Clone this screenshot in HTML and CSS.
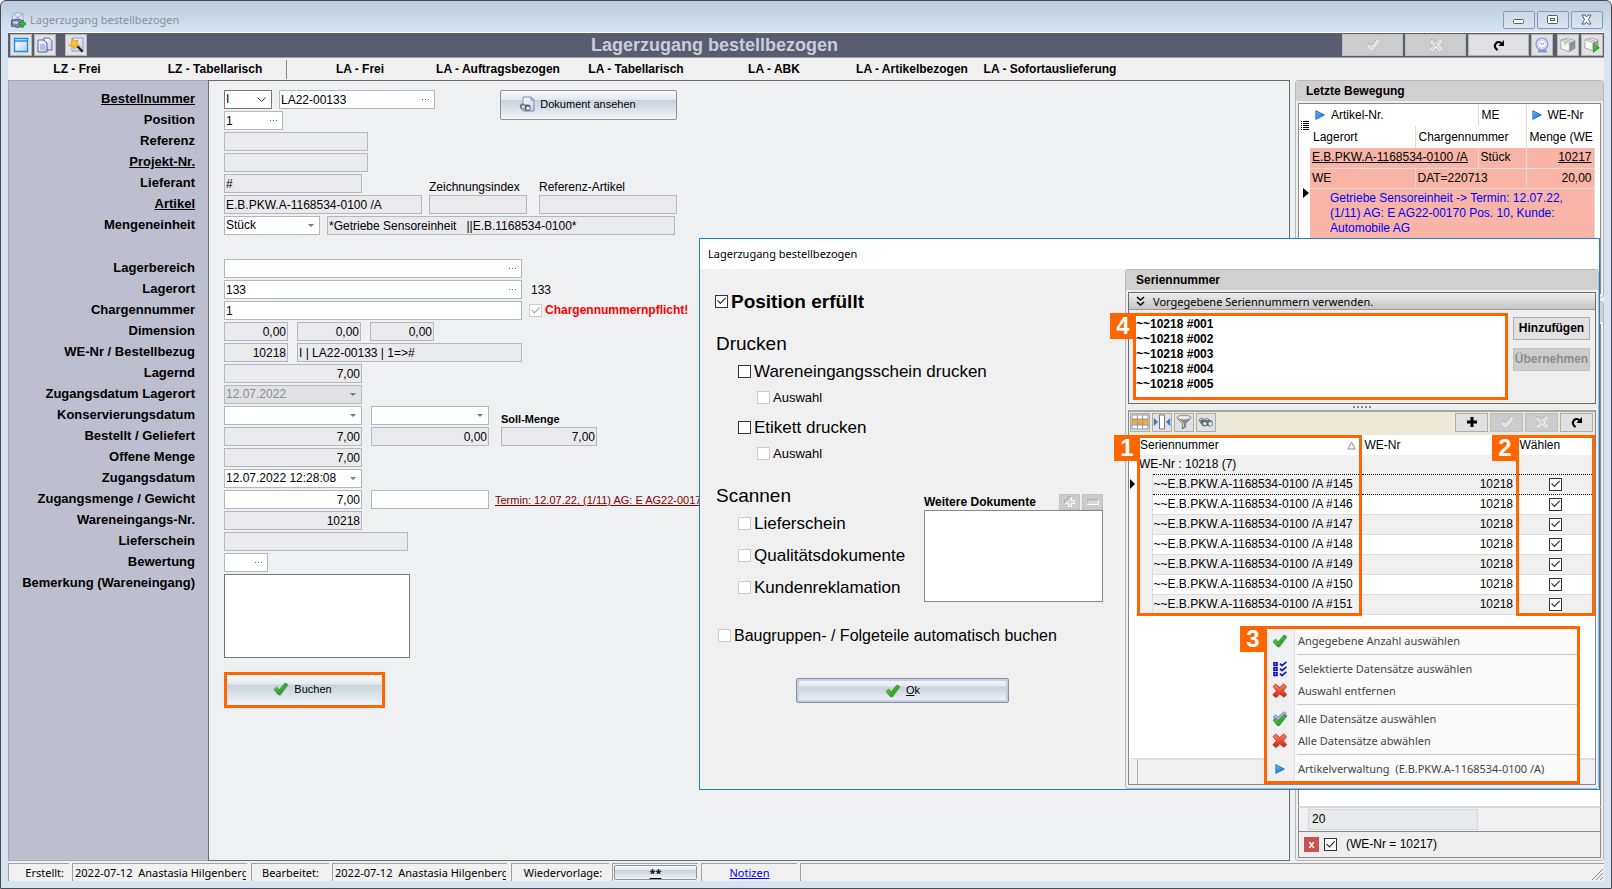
FILE: index.html
```html
<!DOCTYPE html>
<html lang="de">
<head>
<meta charset="utf-8">
<title>Lagerzugang bestellbezogen</title>
<link rel="stylesheet" href="styles.css">
</head>
<body>
<svg class="sprite" aria-hidden="true">
  <defs>
    <linearGradient id="gGreen" x1="0" y1="0" x2="1" y2="1"><stop offset="0" stop-color="#5fe04a"/><stop offset="1" stop-color="#0d8a12"/></linearGradient>
    <linearGradient id="gRed" x1="0" y1="0" x2="0" y2="1"><stop offset="0" stop-color="#ff8a5c"/><stop offset="1" stop-color="#d91e0c"/></linearGradient>
    <linearGradient id="gBlue" x1="0" y1="0" x2="1" y2="1"><stop offset="0" stop-color="#69c3ff"/><stop offset="1" stop-color="#0a5fd0"/></linearGradient>
    <linearGradient id="gPage" x1="0" y1="0" x2="1" y2="1"><stop offset="0" stop-color="#ffffff"/><stop offset="1" stop-color="#c3cdf0"/></linearGradient>
  </defs>
  <symbol id="i-check" viewBox="0 0 16 16"><path d="M2 9.5 4.2 7 7 9.6 12.6 2.8 15.4 4.6 8 14.6 6.4 14.8Z" fill="#9a9a9a" opacity=".7"/><path d="M1 8.5 3.6 6 6.2 8.8 12 2 14.7 3.4 7 13.6 5.2 13.6Z" fill="url(#gGreen)" stroke="#23781f" stroke-width=".6"/></symbol>
  <symbol id="i-checks" viewBox="0 0 16 16"><path d="M1 6 3.4 3.6 6 6 11.6 .8 14.2 2.2 7 10.6 5.4 10.6Z" fill="#a9aee8" stroke="#7378b0" stroke-width=".6"/><path d="M1 9 3.6 7 6.2 9.6 12 3.6 15 4.8 7.4 14.6 5.4 14.6Z" fill="url(#gGreen)" stroke="#3a6a3a" stroke-width=".7"/></symbol>
  <symbol id="i-cross" viewBox="0 0 16 16"><path d="M2.6 5 5.6 2.2 9 5.4 12.6 1.8 15.4 4.4 12 8.4 15.2 12.4 12.4 14.8 8.8 11.8 5 15.4 2 12.6 5.8 8.6Z" fill="#999" opacity=".7"/><path d="M1 3.6 3.8 1 7.6 4.6 11.6 .8 14.2 3.2 10.8 7.2 14.6 11.4 11.6 14 7.6 10.6 3.6 14.4 .8 11.8 4.6 7.8Z" fill="url(#gRed)" stroke="#a81a10" stroke-width=".7"/></symbol>
  <symbol id="i-list" viewBox="0 0 16 16"><g fill="none" stroke="#0a10c8" stroke-width="1.6"><path d="M2 1.8h3v2.6H2zM2 6.8h3v2.6H2zM2 11.8h3v2.6H2z"/><path d="M8 2.6 10 4.6 14.4 .8M8 7.6 10 9.6 14.4 5.8M8 12.6 10 14.6 14.4 10.8"/></g></symbol>
  <symbol id="i-play" viewBox="0 0 10 10"><path d="M.8.6 9.4 5 .8 9.4Z" fill="url(#gBlue)" stroke="#1668c4" stroke-width=".8"/></symbol>
  <symbol id="i-redo" viewBox="0 0 12 12"><path d="M4.6 11C1.6 9.4 1.2 6 3 4.2 4.6 2.6 7 2.8 8.4 4.2" fill="none" stroke="#000" stroke-width="2.1"/><path d="M11 1V7H5.4Z"/></symbol>
  <symbol id="i-tickoff" viewBox="0 0 14 14"><path d="M1.600 8 3.400 6.200 5.400 8.400 11 2.200 12.600 3.600 5.600 11.800Z" fill="#d6d6d6" stroke="#fff" stroke-width="1"/><path d="M1 7.400 3.200 5.400 5.200 7.600 10.800 1.400" fill="none" stroke="#999" stroke-width=".8"/></symbol>
  <symbol id="i-xoff" viewBox="0 0 14 14"><path d="M1.600 3.600 3.600 1.600 7 5 10.600 1.600 12.400 3.600 9 7 12.400 10.600 10.600 12.400 7 9 3.600 12.400 1.600 10.600 5 7Z" fill="#d4d4d4" stroke="#fff" stroke-width="1"/><path d="M1 3.200 3.200 1 6.800 4.400 10.200 1 M1 10.200 4.400 7" fill="none" stroke="#999" stroke-width=".8"/></symbol>
  <symbol id="i-doc" viewBox="0 0 16 16"><path d="M4 1h8l3 3v11H4z" fill="url(#gPage)" stroke="#7e8bb4"/><path d="M12 1v3h3" fill="none" stroke="#7e8bb4"/><circle cx="3.8" cy="10.6" r="3" fill="#777"/><circle cx="8.4" cy="11.8" r="3.2" fill="#555"/><circle cx="4.4" cy="11" r="1.7" fill="#c4e0f4"/><circle cx="9" cy="12.2" r="1.9" fill="#c4e0f4"/></symbol>
  <symbol id="i-binoc" viewBox="0 0 16 16"><path d="M.6 6 3.600 3.600 6 4.400 9 4 13.400 6.400 14 10 9 12 3 10Z" fill="#777"/><path d="M2 6 4.600 4.600 10 5.600" fill="none" stroke="#d4d4d4"/><circle cx="6.400" cy="9.400" r="2.800" fill="#555"/><circle cx="12" cy="9.600" r="3" fill="#666"/><circle cx="6.800" cy="9.600" r="1.900" fill="#c4e0f4"/><circle cx="12.400" cy="9.800" r="2.100" fill="#c4e0f4"/></symbol>
  <symbol id="i-funnel" viewBox="0 0 16 16"><path d="M1 4 6.4 9.6V15L9.6 13V9.6L15 4Z" fill="#8a8a8a" stroke="#666" stroke-width=".7"/><path d="M4 6 7.4 9.6V13" stroke="#ddd" fill="none"/><ellipse cx="8" cy="3.6" rx="7" ry="2.4" fill="#e6e6e6" stroke="#777" stroke-width=".8"/></symbol>
  <symbol id="i-tbl" viewBox="0 0 18 16"><path d="M1 1h16v14H1z" fill="#fff"/><path d="M1 5h16v6H1z" fill="#f7a935"/><path d="M1 1h16v14H1zM6.3 1v14M11.6 1v14M1 5h16M1 11h16" fill="none" stroke="#8d97ad"/></symbol>
  <symbol id="i-cols" viewBox="0 0 18 16"><path d="M6.5 1h5v14h-5z" fill="#fff" stroke="#777"/><path d="M.8 4 5 8 .8 12zM17.2 4 13 8 17.2 12z" fill="#2d7fc8"/></symbol>
  <symbol id="i-app" viewBox="0 0 16 17"><path d="M2 2.400 8 .6 13.400 2V12L9 15.600 2 13.600Z" fill="#dfe2fa" stroke="#8f95c4" stroke-width=".8"/><path d="M4 3 8 6.400 12 2.600" fill="none" stroke="#8088bc" stroke-width=".9"/><path d="M1 8.600 8 7.400 12.600 9V15L8 16.400 1 15Z" fill="#7686b4" stroke="#454e78" stroke-width=".9"/><path d="M3 10.400h5v1.800H3z" fill="#e8ecff"/><path d="M9.200 11.200h2.200V8.900h2.400v2.300h2v2.600h-2v2.400h-2.400v-2.400H9.200z" fill="#38c12e" stroke="#1d7a18" stroke-width=".7"/></symbol>
  <symbol id="i-win" viewBox="0 0 16 16"><path d="M1.5 1.5h13v13h-13z" fill="url(#gPage)" stroke="#1590f4" stroke-width="1.4"/><path d="M1 4h14" stroke="#1590f4" stroke-width="1.6"/></symbol>
  <symbol id="i-copy" viewBox="0 0 16 16"><path d="M7 1h5l3 3v9H7z" fill="url(#gPage)" stroke="#7a5fb0"/><path d="M1 3h6l3 3v9H1z" fill="url(#gPage)" stroke="#4f6294"/><path d="M3 8h5M3 10h5M3 12h5" stroke="#7f91c4" stroke-width=".9"/></symbol>
  <symbol id="i-wand" viewBox="0 0 16 16"><path d="M4 1h11v13H4z" fill="url(#gPage)" stroke="#7f9ae0"/><path d="M8 7.6 14.6 14.8" stroke="#222" stroke-width="2.4"/><path d="M4.6 1.6 6.8 4 10 3 9 6.4 11.4 9 8 9.2 6.4 12.2 4.8 9 1 8.6 3.6 6Z" fill="#ffc62b" stroke="#d98a12" stroke-width=".8"/></symbol>
  <symbol id="i-clock" viewBox="0 0 16 16"><path d="M4 15 5.400 12.400h6l1.400 2.600Z" fill="#8f97dc" stroke="#6f78b8" stroke-width=".6"/><circle cx="8" cy="7" r="6" fill="#dfe3ff" stroke="#8e96dc" stroke-width="1.200"/><circle cx="8" cy="7" r="4" fill="#fff" stroke="#b6bce8" stroke-width=".7"/><path d="M6 5.600 8.400 7.600 10.400 5.600" fill="none" stroke="#6a72c4" stroke-width=".9"/></symbol>
  <symbol id="i-box" viewBox="0 0 16 16"><path d="M.8 3 7 1.400 15 3.600V11.400L9.400 14.600 .8 11.800Z" fill="#f4f4f2" stroke="#9a9a9a" stroke-width=".8"/><path d="M9.400 6 15 3.600V11.400L9.400 14.600Z" fill="#8e8e8e"/><path d="M.8 3 9.400 6V14.600M4 2.200 12 4.800" fill="none" stroke="#a8a8a8"/><path d="M4 4.200V7.400L6.400 8V5" fill="#c8c8c8"/></symbol>
  <symbol id="i-boxgo" viewBox="0 0 16 16"><path d="M1 2.600 7 1 14 3V10.400L8.600 13.600 1 11Z" fill="#fafaf8" stroke="#9a9a9a" stroke-width=".8"/><path d="M8.600 5.600 14 3V10.400L8.600 13.600Z" fill="#9c9c9c"/><path d="M1 2.600 8.600 5.600M4 2 11.600 4.400" fill="none" stroke="#a8a8a8"/><path d="M9.400 6.600 15.400 10.800 9.400 15.400Z" fill="url(#gGreen)" stroke="#1c8a1c" stroke-width=".6"/></symbol>
</svg>

<div class="window">
  <header class="titlebar">
    <svg class="ic16"><use href="#i-app"/></svg>
    <span class="caption">Lagerzugang bestellbezogen</span>
    <div class="winbtns">
      <button aria-label="Minimieren"><svg width="14" height="12"><rect x="1.500" y="5.500" width="10" height="4" rx="1" fill="#fff" stroke="#555a6b"/></svg></button>
      <button aria-label="Maximieren"><svg width="14" height="12"><rect x="1.500" y="1.500" width="10" height="8" rx="1" fill="#fff" stroke="#555a6b"/><rect x="4.500" y="4.500" width="4" height="2" fill="#fff" stroke="#555a6b"/></svg></button>
      <button aria-label="Schließen"><svg width="14" height="12"><path d="M2 1h3l1.500 2L8 1h3L8.500 5.500 11 10H8L6.500 8 5 10H2l2.500-4.500z" fill="#fff" stroke="#555a6b"/></svg></button>
    </div>
  </header>

  <div class="toolbar">
    <button class="tool" aria-label="Fenster"><svg class="ic16"><use href="#i-win"/></svg></button>
    <button class="tool" aria-label="Kopieren"><svg class="ic16"><use href="#i-copy"/></svg></button>
    <button class="tool apart" aria-label="Assistent"><svg class="ic16"><use href="#i-wand"/></svg></button>
    <h1>Lagerzugang bestellbezogen</h1>
    <button class="tool wide off" disabled aria-label="Speichern"><svg class="ic14"><use href="#i-tickoff"/></svg></button>
    <button class="tool wide off" disabled aria-label="Verwerfen"><svg class="ic14"><use href="#i-xoff"/></svg></button>
    <button class="tool wide" aria-label="Aktualisieren"><svg class="ic12"><use href="#i-redo"/></svg></button>
    <button class="tool" aria-label="Wiedervorlage"><svg class="ic16"><use href="#i-clock"/></svg></button>
    <button class="tool near" aria-label="Lager"><svg class="ic16"><use href="#i-box"/></svg></button>
    <button class="tool" aria-label="Lager ausführen"><svg class="ic16"><use href="#i-boxgo"/></svg></button>
  </div>

  <nav class="tabs">
    <a href="#">LZ - Frei</a><a href="#">LZ - Tabellarisch</a><span class="divider"></span>
    <a href="#">LA - Frei</a><a href="#">LA - Auftragsbezogen</a><a href="#">LA - Tabellarisch</a><a href="#">LA - ABK</a><a href="#">LA - Artikelbezogen</a><a href="#">LA - Sofortauslieferung</a>
  </nav>

  <div class="workspace">
    <div class="labels">
      <label class="u" for="f-bestell">Bestellnummer</label>
      <label for="f-pos">Position</label>
      <label for="f-ref">Referenz</label>
      <label class="u" for="f-proj">Projekt-Nr.</label>
      <label for="f-lief">Lieferant</label>
      <label class="u" for="f-art">Artikel</label>
      <label for="f-me">Mengeneinheit</label>
      <label class="section" for="f-lb">Lagerbereich</label>
      <label for="f-lo">Lagerort</label>
      <label for="f-ch">Chargennummer</label>
      <label for="f-dim">Dimension</label>
      <label for="f-we">WE-Nr / Bestellbezug</label>
      <label for="f-lag">Lagernd</label>
      <label for="f-zdl">Zugangsdatum Lagerort</label>
      <label for="f-kon">Konservierungsdatum</label>
      <label for="f-bg">Bestellt / Geliefert</label>
      <label for="f-om">Offene Menge</label>
      <label for="f-zd">Zugangsdatum</label>
      <label for="f-zm">Zugangsmenge / Gewicht</label>
      <label for="f-wn">Wareneingangs-Nr.</label>
      <label for="f-ls">Lieferschein</label>
      <label for="f-bw">Bewertung</label>
      <label for="f-bem">Bemerkung (Wareneingang)</label>
    </div>

    <form class="fields">
      <div class="row tight"><select class="w48 prefix" aria-label="Präfix"><option>I</option></select><input id="f-bestell" class="w156 lookup" value="LA22-00133">
        <button type="button" class="glass doc"><svg class="ic16"><use href="#i-doc"/></svg>Dokument ansehen</button></div>
      <div class="row"><input id="f-pos" class="w59 lookup" value="1"></div>
      <div class="row"><input id="f-ref" class="w144" readonly></div>
      <div class="row"><input id="f-proj" class="w144" readonly></div>
      <div class="row"><input id="f-lief" class="w138" readonly value="#"></div>
      <div class="row tight"><input id="f-art" class="w198" readonly value="E.B.PKW.A-1168534-0100 /A">
        <div class="stack"><label for="f-zi">Zeichnungsindex</label><input id="f-zi" class="w98" readonly></div>
        <div class="stack second"><label for="f-ra">Referenz-Artikel</label><input id="f-ra" class="w138" readonly></div></div>
      <div class="row tight"><select id="f-me" class="w96"><option>Stück</option></select><input class="w348" aria-label="Bezeichnung" readonly value="*Getriebe Sensoreinheit   ||E.B.1168534-0100*"></div>
      <div class="row section"><input id="f-lb" class="w298 lookup"></div>
      <div class="row"><input id="f-lo" class="w298 lookup" value="133"><span class="plain">133</span></div>
      <div class="row tight"><input id="f-ch" class="w298" value="1"><label class="warn"><input type="checkbox" checked disabled>Chargennummernpflicht!</label></div>
      <div class="row"><input id="f-dim" class="w64 num" readonly value="0,00"><input class="w64 num" aria-label="Breite" readonly value="0,00"><input class="w64 num" aria-label="Höhe" readonly value="0,00"></div>
      <div class="row"><input id="f-we" class="w64 num" readonly value="10218"><input class="w225" aria-label="Bestellbezug" readonly value="I | LA22-00133 | 1=&gt;#"></div>
      <div class="row"><input id="f-lag" class="w138 num" readonly value="7,00"></div>
      <div class="row"><select id="f-zdl" class="w138" disabled><option>12.07.2022</option></select></div>
      <div class="row"><select id="f-kon" class="w138"><option></option></select><select class="w118" aria-label="Konservierungsdatum bis"><option></option></select></div>
      <div class="row"><input id="f-bg" class="w138 num" readonly value="7,00"><input class="w118 num" aria-label="Geliefert" readonly value="0,00">
        <div class="stack strong"><label for="f-sm">Soll-Menge</label><input id="f-sm" class="w96 num" readonly value="7,00"></div></div>
      <div class="row"><input id="f-om" class="w138 num" readonly value="7,00"></div>
      <div class="row"><select id="f-zd" class="w138"><option>12.07.2022 12:28:08</option></select></div>
      <div class="row"><input id="f-zm" class="w138 num" value="7,00"><span class="weight"><input class="w118" aria-label="Gewicht"><a class="termin" href="#">Termin: 12.07.22, (1/11) AG: E AG22-00170</a></span></div>
      <div class="row"><input id="f-wn" class="w138 num" readonly value="10218"></div>
      <div class="row"><input id="f-ls" class="w184" readonly></div>
      <div class="row"><input id="f-bw" class="w44 lookup"></div>
      <textarea id="f-bem" class="remark"></textarea>
      <button type="button" class="glass book"><svg class="ic16"><use href="#i-check"/></svg>Buchen</button>
    </form>

    <aside class="side">
      <section class="group upper">
        <h2>Letzte Bewegung</h2>
        <div class="sheet">
          <div class="gutter"><svg width="8" height="10"><path d="M0 1.500h1M2 1.500h6M0 3.500h1M2 3.500h6M0 5.500h1M2 5.500h6M0 7.500h1M2 7.500h6M0 9.500h1M2 9.500h6" stroke="#000"/></svg><svg class="cursor" width="6" height="10"><path d="M0 0 6 5 0 10Z"/></svg></div>
          <table class="moves">
            <colgroup><col class="c1"><col class="c2"><col class="c3"><col class="c4"></colgroup>
            <thead>
              <tr><th colspan="2"><svg class="ic10"><use href="#i-play"/></svg>Artikel-Nr.</th><th>ME</th><th><svg class="ic10"><use href="#i-play"/></svg>WE-Nr</th></tr>
              <tr><th>Lagerort</th><th colspan="2">Chargennummer</th><th>Menge (WE</th></tr>
            </thead>
            <tbody>
              <tr><td colspan="2"><a href="#">E.B.PKW.A-1168534-0100 /A</a></td><td>Stück</td><td class="r"><a href="#">10217</a></td></tr>
              <tr><td>WE</td><td colspan="2">DAT=220713</td><td class="r">20,00</td></tr>
              <tr><td colspan="4" class="note">Getriebe Sensoreinheit -&gt; Termin: 12.07.22, (1/11) AG: E AG22-00170 Pos. 10, Kunde: Automobile AG</td></tr>
            </tbody>
          </table>
        </div>
      </section>
      <section class="group lower">
        <h2></h2>
        <div class="sheet"></div>
        <div class="sum"><output>20</output></div>
        <div class="filter"><button class="clear" aria-label="Filter löschen">x</button><label><input type="checkbox" checked>(WE-Nr = 10217)</label></div>
      </section>
    </aside>
  </div>

  <footer class="status">
    <span class="cell s1">Erstellt:</span><span class="cell s2">2022-07-12&nbsp; Anastasia Hilgenberg</span>
    <span class="cell s3">Bearbeitet:</span><span class="cell s2">2022-07-12&nbsp; Anastasia Hilgenberg</span>
    <span class="cell s4">Wiedervorlage:</span><span class="cell s5"><button class="glass stars">**</button></span>
    <span class="cell s6"><a href="#">Notizen</a></span>
    <span class="cell s7"><svg width="13" height="13"><path d="M1 12 12 1M5 12 12 5M9 12 12 9" stroke="#888" fill="none"/></svg></span>
  </footer>

  <div class="dialog" role="dialog" aria-label="Lagerzugang bestellbezogen">
    <div class="dlg-title">Lagerzugang bestellbezogen</div>
    <div class="dlg-body">
      <div class="options">
        <label class="opt xl"><input type="checkbox" checked>Position erfüllt</label>
        <h3>Drucken</h3>
        <label class="opt in1"><input type="checkbox">Wareneingangsschein drucken</label>
        <label class="opt in2"><input type="checkbox" disabled>Auswahl</label>
        <label class="opt in1"><input type="checkbox">Etikett drucken</label>
        <label class="opt in2"><input type="checkbox" disabled>Auswahl</label>
        <div class="scan">
          <div class="scan-list">
            <h3>Scannen</h3>
            <label class="opt in1"><input type="checkbox" disabled>Lieferschein</label>
            <label class="opt in1"><input type="checkbox" disabled>Qualitätsdokumente</label>
            <label class="opt in1"><input type="checkbox" disabled>Kundenreklamation</label>
          </div>
          <div class="docs">
            <div class="docs-head"><label for="f-docs">Weitere Dokumente</label>
              <button disabled aria-label="Hinzufügen"><svg width="12" height="12"><path d="M4.500 1.500h3v3h3v3h-3v3h-3v-3h-3v-3h3z" fill="#d8d8d8" stroke="#fff"/><path d="M1 7V4h3V1h3" fill="none" stroke="#999"/></svg></button>
              <button disabled aria-label="Entfernen"><svg width="12" height="12"><path d="M.5 4.500h11v4H.5z" fill="#d8d8d8" stroke="#fff"/><path d="M0 8V4h11" fill="none" stroke="#999"/></svg></button></div>
            <textarea id="f-docs"></textarea>
          </div>
        </div>
        <label class="opt last"><input type="checkbox" disabled>Baugruppen- / Folgeteile automatisch buchen</label>
        <button class="glass ok"><svg class="ic16"><use href="#i-check"/></svg><span><u>O</u>k</span></button>
      </div>

      <section class="group serial">
        <h2>Seriennummer</h2>
        <div class="preset">
          <button class="fold"><svg width="9" height="11"><path d="M1 1 4.500 4 8 1M1 6 4.500 9 8 6" fill="none" stroke="#000" stroke-width="1.600"/></svg>Vorgegebene Seriennummern verwenden.</button>
          <div class="preset-body">
            <span class="badge b4">4</span>
            <textarea class="marked" aria-label="Vorgegebene Seriennummern">~~10218 #001
~~10218 #002
~~10218 #003
~~10218 #004
~~10218 #005</textarea>
            <div class="preset-btns"><button class="flat">Hinzufügen</button><button class="flat" disabled>Übernehmen</button></div>
          </div>
        </div>
        <div class="splitter"><i></i><i></i><i></i><i></i><i></i></div>
        <div class="gridbox">
          <div class="gridbar">
            <button aria-label="Tabelle"><svg class="ic18"><use href="#i-tbl"/></svg></button>
            <button aria-label="Spalten"><svg class="ic18"><use href="#i-cols"/></svg></button>
            <button aria-label="Filter"><svg class="ic16"><use href="#i-funnel"/></svg></button>
            <button aria-label="Suchen"><svg class="ic16"><use href="#i-binoc"/></svg></button>
            <button class="act first" aria-label="Neu"><svg width="10" height="10"><path d="M3.500 0h3v3.500H10v3H6.500V10h-3V6.500H0v-3h3.500z"/></svg></button>
            <button class="act" disabled aria-label="Speichern"><svg class="ic14"><use href="#i-tickoff"/></svg></button>
            <button class="act" disabled aria-label="Verwerfen"><svg class="ic14"><use href="#i-xoff"/></svg></button>
            <button class="act" aria-label="Aktualisieren"><svg class="ic12"><use href="#i-redo"/></svg></button>
          </div>
          <div class="gridwrap">
            <table class="serials">
              <colgroup><col class="g1"><col class="g2"><col><col class="g4"><col class="g5"></colgroup>
              <thead><tr><th></th><th colspan="2"><div class="sorted">Seriennummer<svg width="9" height="9"><path d="M4.500 1 8 8H1Z" fill="none" stroke="#888"/></svg></div></th><th>WE-Nr</th><th>Wählen</th></tr></thead>
              <tbody>
                <tr class="grp"><td class="ind"></td><td colspan="4">WE-Nr : 10218 (7)</td></tr>
                <tr class="odd cur"><td class="ind"><svg width="5" height="10"><path d="M0 0 5 5 0 10Z"/></svg></td><td class="pad"></td><td>~~E.B.PKW.A-1168534-0100 /A #145</td><td class="r">10218</td><td class="c"><input type="checkbox" aria-label="#145" checked></td></tr>
                <tr><td class="ind"></td><td class="pad"></td><td>~~E.B.PKW.A-1168534-0100 /A #146</td><td class="r">10218</td><td class="c"><input type="checkbox" aria-label="#146" checked></td></tr>
                <tr class="odd"><td class="ind"></td><td class="pad"></td><td>~~E.B.PKW.A-1168534-0100 /A #147</td><td class="r">10218</td><td class="c"><input type="checkbox" aria-label="#147" checked></td></tr>
                <tr><td class="ind"></td><td class="pad"></td><td>~~E.B.PKW.A-1168534-0100 /A #148</td><td class="r">10218</td><td class="c"><input type="checkbox" aria-label="#148" checked></td></tr>
                <tr class="odd"><td class="ind"></td><td class="pad"></td><td>~~E.B.PKW.A-1168534-0100 /A #149</td><td class="r">10218</td><td class="c"><input type="checkbox" aria-label="#149" checked></td></tr>
                <tr><td class="ind"></td><td class="pad"></td><td>~~E.B.PKW.A-1168534-0100 /A #150</td><td class="r">10218</td><td class="c"><input type="checkbox" aria-label="#150" checked></td></tr>
                <tr class="odd"><td class="ind"></td><td class="pad"></td><td>~~E.B.PKW.A-1168534-0100 /A #151</td><td class="r">10218</td><td class="c"><input type="checkbox" aria-label="#151" checked></td></tr>
              </tbody>
            </table>
            <div class="frame fr1"></div><span class="badge b1">1</span>
            <div class="frame fr2"></div><span class="badge b2">2</span>
          </div>
          <div class="gridfoot"></div>
          <div class="menu" role="menu">
            <span class="badge b3">3</span>
            <button role="menuitem"><svg class="ic16"><use href="#i-check"/></svg>Angegebene Anzahl auswählen</button>
            <hr>
            <button role="menuitem"><svg class="ic16"><use href="#i-list"/></svg>Selektierte Datensätze auswählen</button>
            <button role="menuitem"><svg class="ic16"><use href="#i-cross"/></svg>Auswahl entfernen</button>
            <hr>
            <button role="menuitem"><svg class="ic16"><use href="#i-checks"/></svg>Alle Datensätze auswählen</button>
            <button role="menuitem"><svg class="ic16"><use href="#i-cross"/></svg>Alle Datensätze abwählen</button>
            <hr>
            <button role="menuitem"><svg class="ic16 small"><use href="#i-play"/></svg>Artikelverwaltung&nbsp; (E.B.PKW.A-1168534-0100 /A)</button>
          </div>
        </div>
      </section>
    </div>
  </div>
</div>
</body>
</html>
```
FILE: styles.css
```css
* { box-sizing: border-box; }
body {
  margin: 0;
  font: 12px/15px "Liberation Sans", Arial, sans-serif;
  color: #000;
}
button, input, select, textarea { font: inherit; color: inherit; margin: 0; border-radius: 0; }
button { padding: 0; display: inline-flex; align-items: center; justify-content: center; }
h1, h2, h3 { margin: 0; }
a { color: inherit; }
svg { display: block; flex: none; }
.sprite { position: absolute; width: 0; height: 0; }
.ic10 { width: 10px; height: 10px; }
.ic12 { width: 12px; height: 12px; }
.ic14 { width: 14px; height: 14px; }
.ic16 { width: 16px; height: 16px; }
.ic18 { width: 18px; height: 16px; }

/* window frame */
.window {
  position: relative;
  display: flex;
  flex-direction: column;
  height: 100vh;
  min-height: 820px;
  padding: 0 7px 7px;
  border: 1px solid #4a4a52;
  border-radius: 6px 6px 0 0;
  background: linear-gradient(#bccbdb, #d6e4f2 31px);
  overflow: hidden;
}
.titlebar { display: flex; align-items: center; height: 31px; flex: none; padding: 6px 1px 0 2px; }
.caption { flex: 1; padding-left: 4px; font: 11px/16px "Noto Sans", sans-serif; color: #8c8f96; }
.winbtns { display: flex; gap: 2px; }
.winbtns button { width: 32px; height: 18px; border: 1px solid #8a9bb2; border-radius: 2px; background: linear-gradient(#cbd8e6, #d9e5f1); }

.toolbar {
  display: flex;
  align-items: center;
  gap: 2px;
  flex: none;
  height: 26px;
  padding: 0 1px 0 2px;
  border-top: 1px solid #fff;
  border-bottom: 1px solid #a0a0a0;
  background: #5a5d6e;
}
.toolbar h1 { flex: 1; text-align: center; font-size: 18px; line-height: 22px; color: #c9cddb; }
.tool { width: 22px; height: 22px; border: 1px solid #b4b4b4; background: #e1e1e1; }
.tool.wide { width: 61px; }
.tool.off { background: #ccc; border-color: #bfbfbf; }
.tool.apart { margin-left: 7px; }
.tool.near { margin-left: 2px; }

.tabs { display: flex; align-items: center; flex: none; height: 22px; background: #f0f0f0; font-weight: bold; }
.tabs a { width: 138px; text-align: center; text-decoration: none; white-space: nowrap; }
.tabs .divider { width: 1px; height: 19px; margin: 0 4px 0 2px; background: #888; }

/* form */
.workspace { display: flex; flex: 1; min-height: 0; background: #f0f0f0; }
.labels {
  width: 200px;
  flex: none;
  padding: 9px 13px 0 0;
  border: 1px solid #a4a6b6;
  border-width: 1px 0 1px 1px;
  background: #bdbfcf;
  text-align: right;
  font-weight: bold;
  font-size: 13px;
}
.labels label { display: block; height: 19px; line-height: 18px; margin-bottom: 2px; }
.labels .u { text-decoration: underline; }
.labels .section, .row.section { margin-top: 24px; }
.fields {
  flex: 1;
  min-width: 0;
  padding: 9px 0 0 15px;
  border: 1px solid #6b6b70;
  background: #eff0f2;
  overflow: hidden;
}
.row { display: flex; gap: 9px; height: 19px; margin-bottom: 2px; }
.row.tight { gap: 7px; }
.weight { display: flex; gap: 6px; }
.row input:not([type=checkbox]), .row select {
  height: 19px;
  padding: 0 3px 0 1px;
  border: 1px solid #b2b7c1;
  background-color: #fff;
  flex: none;
  outline: none;
}
.row input[readonly] { background-color: #eaeaec; white-space: pre; }
.row select {
  appearance: none;
  background-image: url("data:image/svg+xml,%3Csvg xmlns='http://www.w3.org/2000/svg' width='6' height='3'%3E%3Cpath d='M0 0h6L3 3z' fill='%23777'/%3E%3C/svg%3E");
  background-repeat: no-repeat;
  background-position: right 5px center;
}
.row select:disabled { background-color: #e1e1e4; color: #8d8d8d; opacity: 1; }
.row select.prefix {
  border-color: #777;
  background-image: url("data:image/svg+xml,%3Csvg xmlns='http://www.w3.org/2000/svg' width='9' height='6'%3E%3Cpath d='M.5.5l4 4 4-4' fill='none' stroke='%23444'/%3E%3C/svg%3E");
}
.row input.lookup {
  background-image: url("data:image/svg+xml,%3Csvg xmlns='http://www.w3.org/2000/svg' width='8' height='1'%3E%3Cpath d='M0 .5h1M3 .5h1M6 .5h1' stroke='%23666'/%3E%3C/svg%3E");
  background-repeat: no-repeat;
  background-position: right 4px center;
}
.row .num { text-align: right; }
.row input.num { padding-right: 1px; }
.w44 { width: 44px; } .w48 { width: 48px; } .w59 { width: 59px; } .w64 { width: 64px; }
.w96 { width: 96px; } .w98 { width: 98px; } .w118 { width: 118px; } .w138 { width: 138px; }
.w144 { width: 144px; } .w156 { width: 156px; } .w184 { width: 184px; } .w198 { width: 198px; }
.w225 { width: 225px; } .w298 { width: 298px; } .w348 { width: 348px; }
.stack { display: flex; flex-direction: column; justify-content: flex-end; }
.stack label { height: 16px; white-space: nowrap; }
.stack.second { margin-left: 5px; }
.stack.strong { margin-left: 3px; }
.stack.strong label { font-weight: bold; font-size: 11px; }
.plain { line-height: 21px; }
.warn { display: flex; align-items: center; gap: 3px; color: #f00; font-weight: bold; }
.termin { color: #800000; font-size: 11px; line-height: 20px; white-space: nowrap; }
.remark { display: block; width: 186px; height: 84px; border: 1px solid #777; resize: none; background: #fff; }

.glass {
  gap: 5px;
  border: 1px solid #8c939e;
  border-radius: 2px;
  background: linear-gradient(#fafbfc, #e4e9ef 30%, #c9d3dd 34%, #e3e9ef 80%, #f4f6f8);
  font-size: 11px;
}
.glass.doc { width: 177px; height: 30px; margin-left: 58px; padding: 0 22px 2px 0; flex: none; }
.glass.book { width: 161px; height: 36px; margin-top: 14px; padding: 0 4px 2px 0; border: 3px solid #f60; border-radius: 0; }

input[type=checkbox] {
  appearance: none;
  flex: none;
  display: block;
  width: 13px;
  height: 13px;
  border: 1px solid #333;
  background: #fff;
}
input[type=checkbox]:checked::before {
  content: "";
  display: block;
  width: 11px;
  height: 11px;
  background: #333;
  clip-path: polygon(10% 48%, 18% 40%, 40% 64%, 84% 18%, 92% 26%, 40% 80%);
}
input[type=checkbox]:disabled { border-color: #ccc; }
input[type=checkbox]:disabled:checked::before { background: #aaa; }

/* right column */
.side { display: flex; flex-direction: column; gap: 3px; width: 314px; flex: none; padding-left: 5px; }
.group { display: flex; flex-direction: column; border: 1px solid #b8b8b8; border-radius: 3px; background: #eee; }
.group h2 { height: 20px; flex: none; padding-left: 10px; font-size: 12px; line-height: 20px; background: #d0d0d0; border-radius: 3px 3px 0 0; }
.upper { height: 218px; flex: none; }
.upper .sheet { display: flex; flex: 1; min-height: 0; margin: 2px 2px 3px; border: 1px solid #868993; background: #fff; overflow: hidden; }
.gutter { width: 11px; flex: none; padding: 16px 0 0 2px; }
.gutter .cursor { margin: 58px 0 0 2px; }
.moves { width: 284px; table-layout: fixed; border-collapse: collapse; align-self: flex-start; }
.c1 { width: 105px; } .c2 { width: 63px; } .c3 { width: 48px; } .c4 { width: 68px; }
.moves th { height: 22px; padding: 0 3px; text-align: left; font-weight: normal; white-space: nowrap; overflow: hidden; border-right: 1px solid #dcdcdc; }
.moves th:last-child { border-right: 0; padding-right: 0; }
.moves th svg { display: inline-block; margin: 0 6px 0 2px; vertical-align: -1px; }
.moves td { height: 20px; padding: 0 2px; background: #f8b5a6; border: 1px solid #dcdcdc; border-width: 0 1px 1px 0; white-space: nowrap; }
.moves .r, .serials .r { text-align: right; }
.moves td.note { padding: 2px 18px 3px 20px; white-space: normal; color: #00f; vertical-align: top; }
.lower { flex: 1; min-height: 0; }
.lower .sheet { flex: 1; margin: 2px 2px 0; border: 1px solid #868993; border-bottom: 0; background: #fff; }
.sum { height: 25px; margin: 0 2px; padding: 1px 0 1px 9px; border: 1px solid #868993; border-width: 0 1px; border-top: 2px solid #d8d8d8; background: #f0f0f0; }
.sum output { display: block; width: 170px; height: 21px; padding-left: 3px; line-height: 19px; border: 1px solid #d5d8d8; background: #e6eaea; }
.filter { display: flex; align-items: center; gap: 5px; height: 27px; margin: 0 2px 2px; padding-left: 5px; border: 1px solid #868993; }
.filter label { display: flex; align-items: center; gap: 9px; }
.clear { width: 15px; height: 15px; border: 0; background: #c75050; color: #fff; font-size: 11px; font-weight: bold; line-height: 13px; }

/* status bar */
.status { display: flex; gap: 3px; flex: none; height: 20px; padding-top: 2px; background: #f0f0f0; font: 11px/17px "Noto Sans", sans-serif; }
.cell { border: 1px solid #a0a0a0; border-width: 1px 0 0 1px; white-space: nowrap; overflow: hidden; }
.s1 { width: 61px; padding-right: 5px; text-align: right; }
.s2 { width: 176px; padding-left: 2px; border-right: 2px solid #f0f0f0; }
.s3 { width: 78px; text-align: center; }
.s4 { width: 98px; padding-left: 5px; text-align: center; }
.s5 { width: 86px; padding: 1px; }
.s6 { width: 96px; text-align: center; color: #00f; }
.s7 { flex: 1; display: flex; justify-content: flex-end; align-items: flex-end; }
.stars { display: flex; width: 83px; height: 15px; text-decoration: underline; font-weight: bold; }

/* dialog */
.dialog {
  position: absolute;
  left: 698px;
  right: 11px;
  top: 237px;
  height: 552px;
  display: flex;
  flex-direction: column;
  border: 1px solid #1b82d2;
  background: #f0f0f0;
}
.dlg-title { height: 30px; flex: none; padding-left: 8px; background: #fff; font: 11px/30px "Noto Sans", sans-serif; }
.dlg-body { display: flex; flex: 1; min-height: 0; }
.options { width: 425px; flex: none; padding: 22px 0 0 15px; }
.options h3 { font-size: 19px; line-height: 22px; font-weight: normal; padding-left: 1px; }
.opt { display: flex; align-items: center; gap: 3px; height: 20px; font-size: 17px; white-space: nowrap; }
.opt.xl { font-size: 19px; font-weight: bold; }
.opt.xl + h3 { margin: 22px 0 6px; }
.opt.in1 { padding-left: 23px; }
.opt.in2 { padding-left: 42px; margin: 6px 0 10px; font-size: 13px; }
.scan { display: flex; margin-top: 18px; }
.scan-list { width: 209px; }
.scan-list h3 { margin: 4px 0 6px; }
.scan-list .opt { margin-bottom: 12px; }
.docs { width: 179px; padding-top: 13px; }
.docs-head { display: flex; align-items: center; gap: 2px; height: 16px; font-weight: bold; }
.docs-head label { flex: 1; white-space: nowrap; }
.docs-head button { width: 21px; height: 16px; border: 1px solid #c2c2c2; background: #ccc; }
.docs textarea { display: block; width: 100%; height: 92px; border: 1px solid #868993; background: #fff; resize: none; }
.opt.last { margin: 16px 0 0 3px; font-size: 16px; }
.glass.ok { width: 213px; height: 25px; margin: 33px 0 0 81px; box-shadow: inset 0 0 0 2px #c3cfe4; }

.serial { flex: 1; min-width: 0; }
.preset { margin: 2px; border: 1px solid #6b6b70; height: 112px; flex: none; display: flex; flex-direction: column; }
.fold { height: 17px; flex: none; justify-content: flex-start; gap: 8px; padding-left: 7px; border: 0; border-bottom: 1px solid #999; background: linear-gradient(#eee, #c4c4c4); font: 11px/15px "Noto Sans", sans-serif; }
.preset-body { position: relative; display: flex; gap: 5px; flex: 1; min-height: 0; padding: 3px 5px 3px 4px; }
.marked { flex: 1; min-width: 0; padding: 1px 0 0; border: 3px solid #f60; resize: none; background: #fff; font-weight: bold; overflow: hidden; outline: none; }
.preset-btns { display: flex; flex-direction: column; gap: 8px; padding-top: 4px; }
.flat { width: 77px; height: 23px; border: 1px solid #adadad; background: #e1e1e1; font-weight: bold; }
.flat:disabled { border-color: #bfbfbf; background: #ccc; color: #8c8c8c; }
.splitter { display: flex; gap: 2px; justify-content: center; align-items: center; height: 6px; flex: none; margin: -2px 0 0; }
.splitter i { width: 2px; height: 2px; background: #888; }
.gridbox { position: relative; display: flex; flex-direction: column; flex: 1; min-height: 0; margin: 0 2px 3px; border: 1px solid #868993; border-top: 2px solid #a5a5a5; background: #fff; }
.gridbar { display: flex; gap: 2px; align-items: center; flex: none; height: 23px; padding: 0 2px 3px 1px; background: #ece9d8; }
.gridbar button { width: 20px; height: 19px; border: 1px solid #adadad; background: #e1e1e1; }
.gridbar .act { width: 33px; }
.gridbar .first { margin-left: auto; }
.gridbar .act:disabled { background: #ccc; border-color: #bfbfbf; }
.gridwrap { position: relative; flex: 1; min-height: 0; }
.serials { width: 100%; table-layout: fixed; border-collapse: collapse; }
.g1 { width: 8px; } .g2 { width: 15px; } .g4 { width: 155px; } .g5 { width: 78px; }
.serials th { height: 20px; padding: 0 3px; text-align: left; font-weight: normal; }
.sorted { display: flex; align-items: center; justify-content: space-between; padding-right: 3px; }
.serials td { height: 20px; padding: 0 3px; border-bottom: 1px solid #ddd; border-right: 1px solid #ddd; white-space: nowrap; }
.serials td:nth-child(3) { padding-left: 1px; }
.serials .grp td { height: 19px; background: #f0f0f0; border: 0; padding-left: 2px; }
.serials .odd td, .serials td.pad { background: #f0f0f0; }
.serials .cur td { border-top: 1px dotted #000; border-bottom: 1px dotted #000; }
.serials td.pad, .serials .cur td.pad { border-top: 0; border-bottom: 0; padding: 0; }
.serials td.ind, .serials .grp td.ind, .serials .cur td.ind { padding: 0 0 0 1px; border: 0; background: #fff; }
.serials .c input { margin: 0 auto; }
.gridfoot { height: 26px; flex: none; border-top: 2px solid #ddd; background: #f0f0f0; border-left: 8px solid #f0f0f0; box-shadow: inset 1px 0 #b0b0b0; }

/* numbered callouts */
.frame { position: absolute; border: 3px solid #f60; pointer-events: none; }
.fr1 { left: 8px; right: 233px; top: 0; height: 181px; }
.fr2 { right: 0; width: 79px; top: 0; height: 181px; }
.badge { position: absolute; width: 26px; height: 26px; background: #f60; color: #fff; font: bold 24px/26px "Liberation Sans", Arial, sans-serif; text-align: center; }
.b1 { left: -15px; top: 0; }
.b2 { right: 77px; top: 0; }
.b3 { left: -27px; top: -3px; }
.b4 { left: -19px; top: 3px; }

.menu {
  position: absolute;
  right: 15px;
  bottom: 0;
  width: 316px;
  border: 3px solid #f60;
  padding: 1px 0;
  background: linear-gradient(90deg, #f0f0f0 27px, #c8c8c8 27px, #fafafa 28px);
}
.menu button { display: flex; justify-content: flex-start; gap: 10px; width: 100%; height: 22px; padding-left: 5px; border: 0; background: none; font: 11px/16px "Noto Sans", sans-serif; color: #444; white-space: nowrap; }
.menu hr { height: 1px; margin: 2px 0 3px 30px; border: 0; background: #c8c8c8; }
.menu .small { padding: 3px; }
```
